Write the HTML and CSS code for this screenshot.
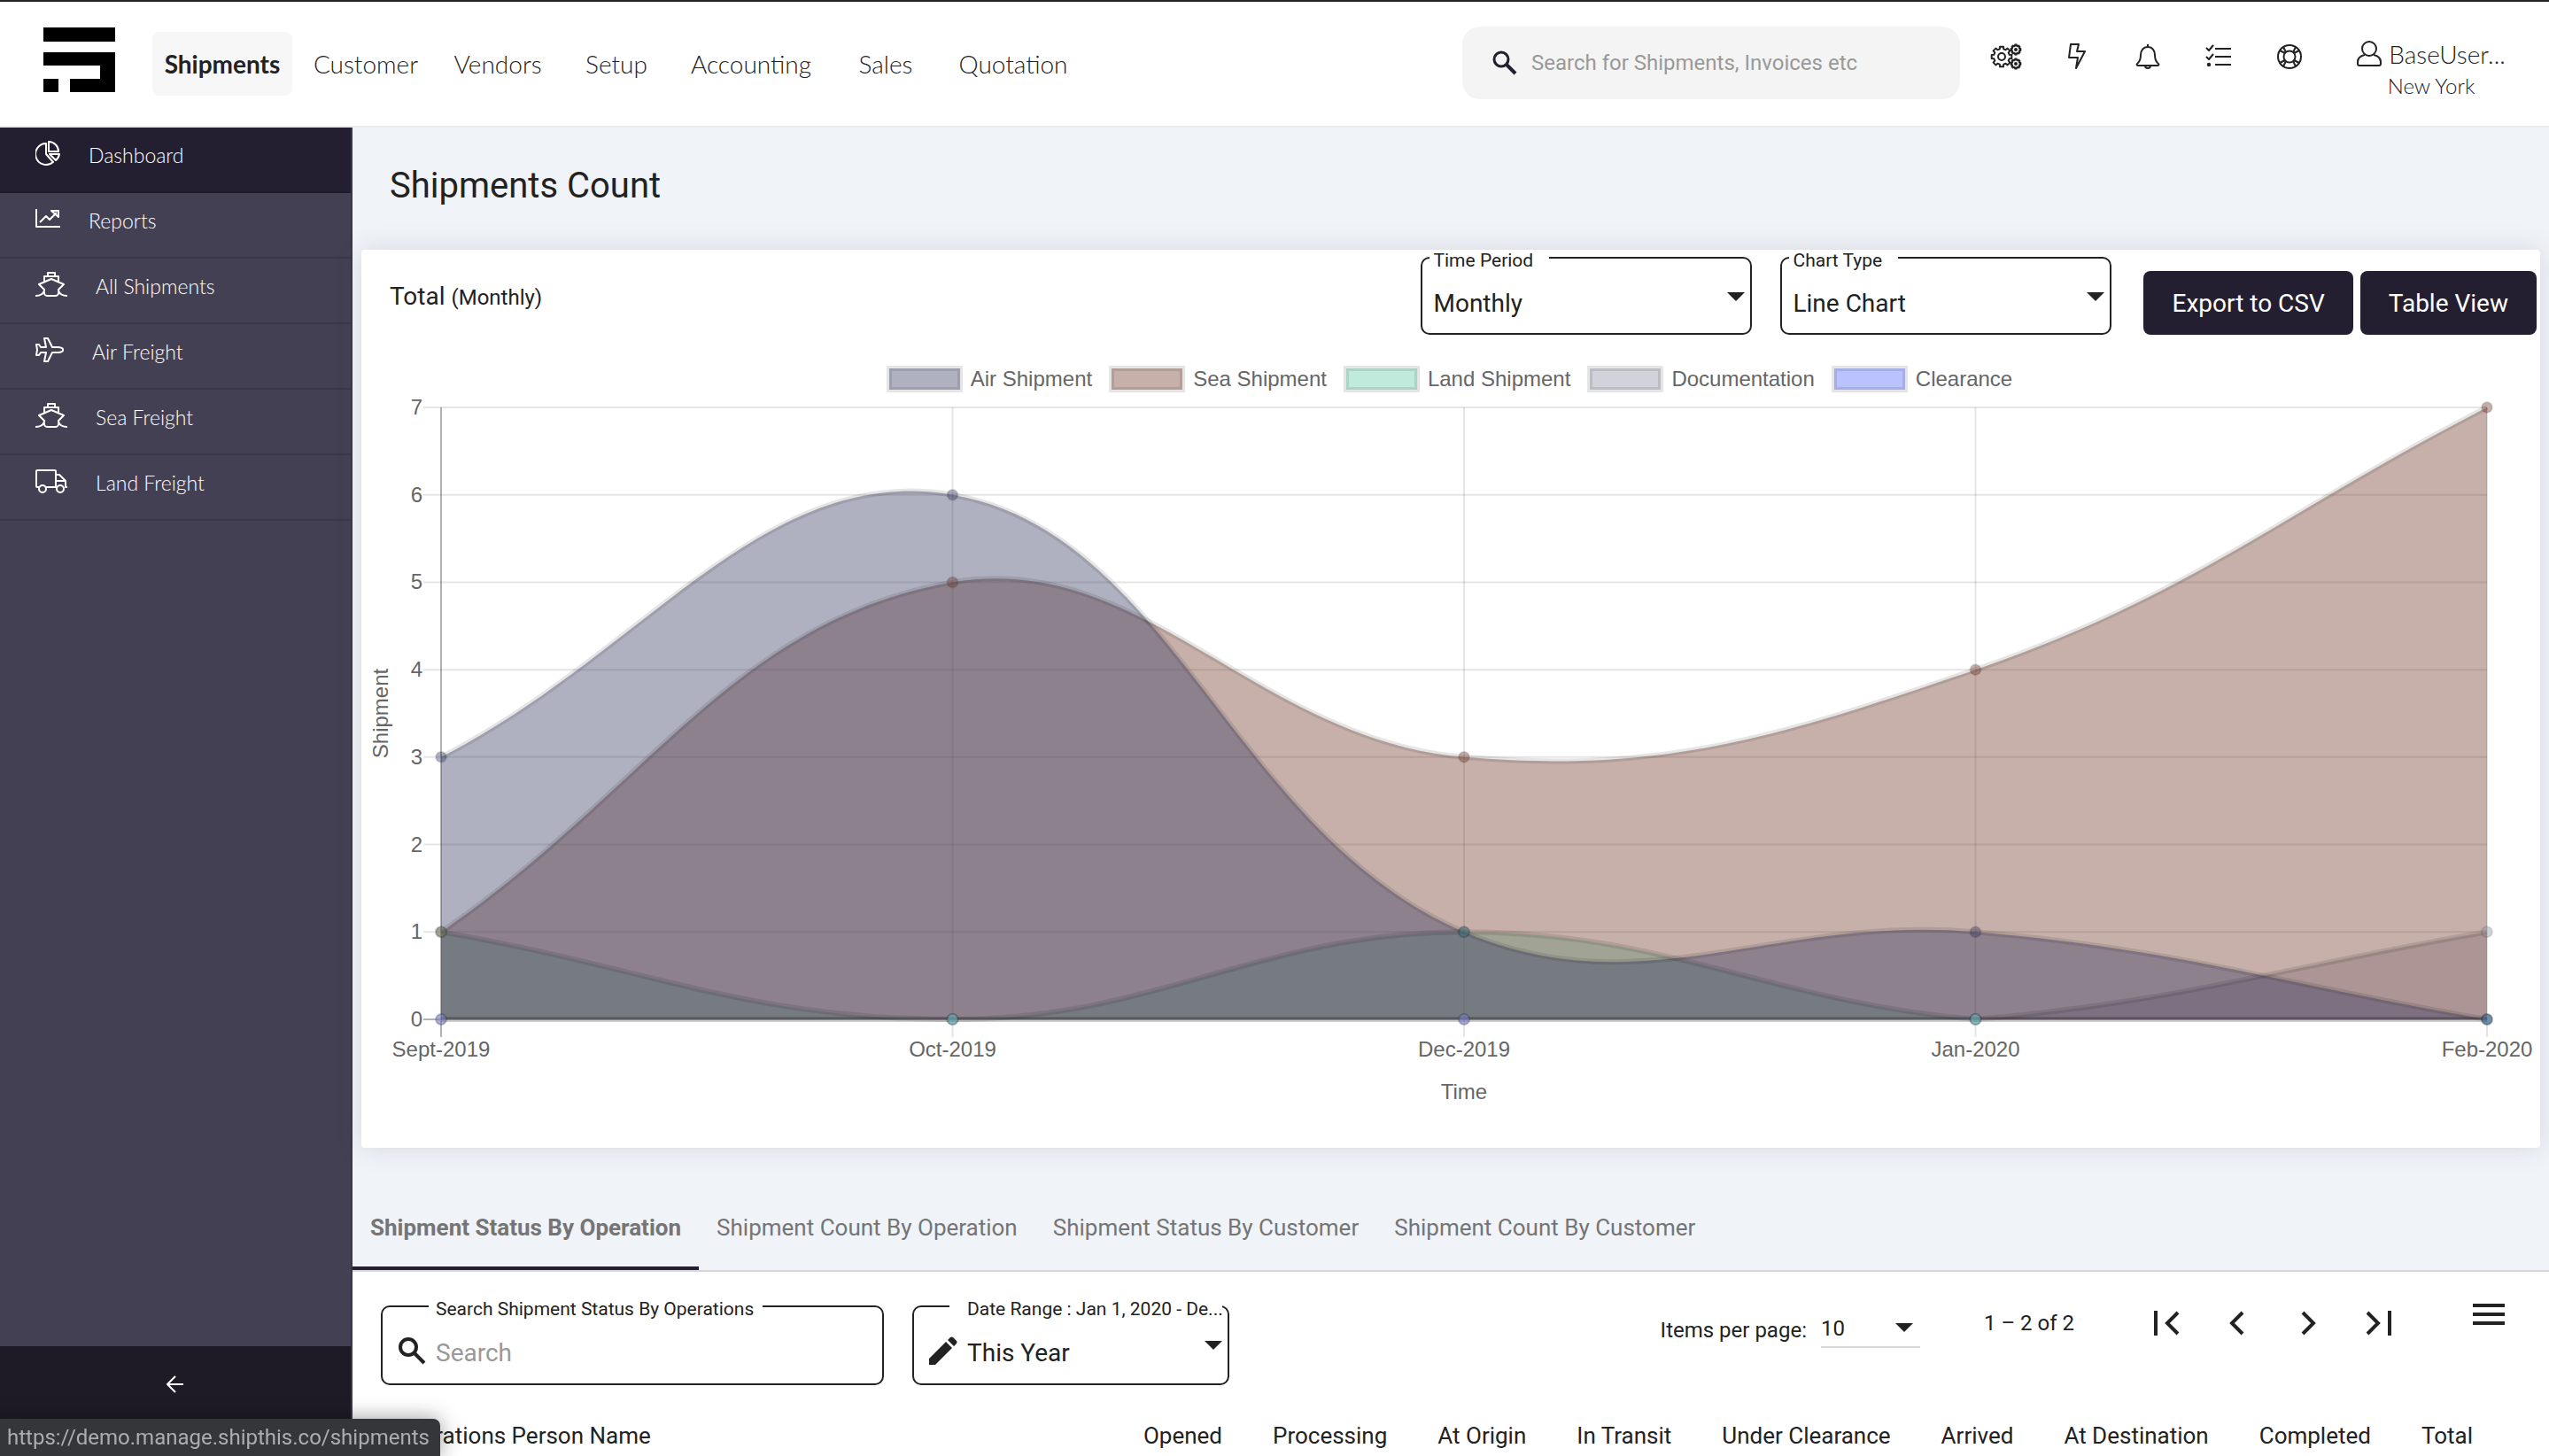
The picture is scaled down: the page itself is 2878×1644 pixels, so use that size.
FILE: index.html
```html
<!DOCTYPE html>
<html lang="en">
<head>
    <meta charset="UTF-8">
    <title>Shipments</title>
    <link rel="stylesheet" href="styles.css">
</head>
<body>

<header class="header">
    <a class="logo" href="#" aria-label="Home">
        <svg width="82" height="74" viewBox="0 0 82 74">
            <path d="M0 0h81v16H0zM0 28h81v45H30V58h34V43H0zM0 58h17v15H0z"/>
        </svg>
    </a>
    <nav class="menu">
        <a class="active" href="#">Shipments</a>
        <a href="#">Customer</a>
        <a href="#">Vendors</a>
        <a href="#">Setup</a>
        <a href="#">Accounting</a>
        <a href="#">Sales</a>
        <a href="#">Quotation</a>
    </nav>
    <label class="search">
        <svg width="28" height="28" viewBox="0 0 28 28">
            <circle cx="10" cy="10" r="8" fill="none" stroke="#241f30" stroke-width="3"/>
            <path d="M16 16l10 10" stroke="#241f30" stroke-width="4"/>
        </svg>
        <input type="text" placeholder="Search for Shipments, Invoices etc">
    </label>
    <div class="tools">
        <button aria-label="Settings">
            <svg class="icon" width="36" height="30" viewBox="0 0 36 30">
                <defs>
                    <path id="gear" d="M8.7-2.2L11.3-2V2L8.7 2.2 7.7 4.6 9.4 6.6 6.6 9.4 4.6 7.7 2.2 8.7 2 11.3H-2L-2.2 8.7-4.6 7.7-6.6 9.4-9.4 6.6-7.7 4.6-8.7 2.2-11.3 2V-2L-8.7-2.2-7.7-4.6-9.4-6.6-6.6-9.4-4.6-7.7-2.2-8.7-2-11.3H2L2.2-8.7 4.6-7.7 6.6-9.4 9.4-6.6 7.7-4.6z"/>
                </defs>
                <use href="#gear" transform="translate(13 15)"/>
                <circle cx="13" cy="15" r="4"/>
                <use href="#gear" transform="translate(29 7) scale(.48)" stroke-width="4"/>
                <circle cx="29" cy="7" r="1"/>
                <use href="#gear" transform="translate(29 23) scale(.48)" stroke-width="4"/>
                <circle cx="29" cy="23" r="1"/>
            </svg>
        </button>
        <button aria-label="Quick actions">
            <svg class="icon" width="22" height="30" viewBox="0 0 22 30">
                <path d="M4 1h9l-2 8h9L10 28l2-12H2z"/>
            </svg>
        </button>
        <button aria-label="Notifications">
            <svg class="icon" width="28" height="30" viewBox="0 0 28 30">
                <path d="M14 1v3M14 4c-5 0-8 4-8 9 0 7-2 8-4 10-1 1 0 2 1 2h22c1 0 2-1 1-2-2-2-4-3-4-10 0-5-3-9-8-9zM11 25c0 4 6 4 6 0"/>
            </svg>
        </button>
        <button aria-label="Tasks">
            <svg class="icon" width="30" height="30" viewBox="0 0 30 30">
                <path d="M1 5l3 3 5-6M1 15l3 3 5-6M11 6h18M11 15h18M11 24h18"/>
                <circle cx="4" cy="24" r="1.2"/>
            </svg>
        </button>
        <button aria-label="Help">
            <svg class="icon" width="30" height="30" viewBox="0 0 30 30">
                <circle cx="15" cy="15" r="13"/>
                <circle cx="15" cy="15" r="6.5"/>
                <path d="M4 8l6 3M8 4l3 6M22 4l-3 6M26 8l-6 3M4 22l6-3M8 26l3-6M22 26l-3-6M26 22l-6-3"/>
            </svg>
        </button>
    </div>
    <button class="user">
        <span class="user-name">
            <svg class="icon" width="28" height="30" viewBox="0 0 28 30">
                <circle cx="14" cy="9" r="8"/>
                <path d="M9 16c-5 1-8 4-8 8v2c0 1 1 2 2 2h22c1 0 2-1 2-2v-2c0-4-3-7-8-8"/>
            </svg>
            BaseUser...
        </span>
        <span class="user-city">New York</span>
    </button>
</header>

<div class="page">
    <aside class="sidebar">
        <nav>
            <a class="active" href="#">
                <svg class="icon" width="28" height="28" viewBox="0 0 28 28">
                    <path d="M12 3A12 12 0 1 0 20 24L12 15zM15 1v11h11A11 11 0 0 0 15 1zM16 15h11a11 11 0 0 1-4 7z"/>
                </svg>
                Dashboard
            </a>
            <a href="#">
                <svg class="icon" width="28" height="28" viewBox="0 0 28 28">
                    <path d="M1 3v20h27M5 18l7-7 4 4 8-8M18 5h8v7z"/>
                </svg>
                Reports
            </a>
            <a href="#">
                <svg class="icon" width="36" height="28" viewBox="0 0 36 28">
                    <path d="M10 11V5h16v6M14 5V1h8v4M18 8L4 14l6 6c-1 5 1 7 3 7h10c2 0 4-2 3-7l6-6zM0 27c6 0 9-2 10-6M36 27c-6 0-9-2-10-6"/>
                </svg>
                All Shipments
            </a>
            <a href="#">
                <svg class="icon" width="32" height="28" viewBox="0 0 32 28">
                    <path d="M19 11h7c7 1 7 5 0 6h-7l-5 10h-4l2-10H6l-2 3H1l1-6-1-6h3l2 3h6L10 1h4z"/>
                </svg>
                Air Freight
            </a>
            <a href="#">
                <svg class="icon" width="36" height="28" viewBox="0 0 36 28">
                    <path d="M10 11V5h16v6M14 5V1h8v4M18 8L4 14l6 6c-1 5 1 7 3 7h10c2 0 4-2 3-7l6-6zM0 27c6 0 9-2 10-6M36 27c-6 0-9-2-10-6"/>
                </svg>
                Sea Freight
            </a>
            <a href="#">
                <svg class="icon" width="36" height="28" viewBox="0 0 36 28">
                    <path d="M4 21H2c-1 0-1-1-1-1V3c0-1 1-1 1-1h20c1 0 1 1 1 1v18H12M23 7h4l7 7v7h2M34 14H23M23 21h1"/>
                    <circle cx="8" cy="23" r="4"/>
                    <circle cx="28" cy="23" r="4"/>
                </svg>
                Land Freight
            </a>
        </nav>
        <button class="collapse" aria-label="Collapse menu">
            <svg class="icon" width="20" height="20" viewBox="0 0 20 20">
                <path d="M19 10H2M10 1l-9 9 9 9"/>
            </svg>
        </button>
    </aside>

    <main class="main">
        <h1>Shipments Count</h1>

        <section class="card">
            <div class="card-head">
                <h2>Total <small>(Monthly)</small></h2>
                <div class="field">
                    <label for="period">Time Period</label>
                    <select id="period">
                        <option>Monthly</option>
                    </select>
                    <svg class="caret" width="20" height="10"><path d="M0 0h20L10 10z"/></svg>
                </div>
                <div class="field">
                    <label for="type">Chart Type</label>
                    <select id="type">
                        <option>Line Chart</option>
                    </select>
                    <svg class="caret" width="20" height="10"><path d="M0 0h20L10 10z"/></svg>
                </div>
                <div class="buttons">
                    <button>Export to CSV</button>
                    <button>Table View</button>
                </div>
            </div>
            <ul class="legend">
                <li><span class="swatch air"></span>Air Shipment</li>
                <li><span class="swatch sea"></span>Sea Shipment</li>
                <li><span class="swatch land"></span>Land Shipment</li>
                <li><span class="swatch docs"></span>Documentation</li>
                <li><span class="swatch clearance"></span>Clearance</li>
            </ul>
            <svg class="chart" id="chart"></svg>
        </section>

        <nav class="tabs">
            <a class="active" href="#">Shipment Status By Operation</a>
            <a href="#">Shipment Count By Operation</a>
            <a href="#">Shipment Status By Customer</a>
            <a href="#">Shipment Count By Customer</a>
        </nav>

        <section class="status">
            <div class="toolbar">
                <div class="field field-search">
                    <label for="search">Search Shipment Status By Operations</label>
                    <svg class="field-icon" width="32" height="32" viewBox="0 0 32 32">
                        <circle cx="12" cy="12" r="9" fill="none" stroke="#222" stroke-width="4"/>
                        <path d="M19 19l11 11" stroke="#222" stroke-width="4"/>
                    </svg>
                    <input id="search" type="text" placeholder="Search">
                </div>
                <div class="field field-date">
                    <label for="range">Date Range : Jan 1, 2020 - De...</label>
                    <svg class="field-icon" width="32" height="32" viewBox="0 0 32 32">
                        <path d="M0 32v-7L19 6l7 7L7 32zM21 4l3-3q2-1 3 0l4 4q1 1 0 3l-3 3z" fill="#222"/>
                    </svg>
                    <select id="range">
                        <option>This Year</option>
                    </select>
                    <svg class="caret" width="20" height="10"><path d="M0 0h20L10 10z"/></svg>
                </div>
                <div class="paginator">
                    <label for="size">Items per page:</label>
                    <div class="size">
                        <select id="size">
                            <option>10</option>
                        </select>
                        <svg class="caret" width="20" height="10"><path d="M0 0h20L10 10z"/></svg>
                    </div>
                    <span class="range">1 – 2 of 2</span>
                    <button aria-label="First page">
                        <svg width="32" height="28" viewBox="0 0 32 28"><path d="M4 0v28M29 2L17 14l12 12"/></svg>
                    </button>
                    <button aria-label="Previous page">
                        <svg width="32" height="28" viewBox="0 0 32 28"><path d="M22 2L10 14l12 12"/></svg>
                    </button>
                    <button aria-label="Next page">
                        <svg width="32" height="28" viewBox="0 0 32 28"><path d="M10 2l12 12-12 12"/></svg>
                    </button>
                    <button aria-label="Last page">
                        <svg width="32" height="28" viewBox="0 0 32 28"><path d="M28 0v28M3 2l12 12L3 26"/></svg>
                    </button>
                </div>
                <button class="columns" aria-label="Columns">
                    <svg width="36" height="24"><path d="M0 0h36v4H0zM0 10h36v4H0zM0 20h36v4H0z"/></svg>
                </button>
            </div>
            <table class="table">
                <thead>
                <tr>
                    <th>Operations Person Name</th>
                    <th>Opened</th>
                    <th>Processing</th>
                    <th>At Origin</th>
                    <th>In Transit</th>
                    <th>Under Clearance</th>
                    <th>Arrived</th>
                    <th>At Destination</th>
                    <th>Completed</th>
                    <th>Total</th>
                </tr>
                </thead>
            </table>
        </section>
    </main>
</div>

<div class="link-status">https://demo.manage.shipthis.co/shipments</div>

<script src="chart.js"></script>
</body>
</html>
```

FILE: styles.css
```css
* {
    box-sizing: border-box;
}

body {
    margin: 0;
    height: 100vh;
    display: flex;
    flex-direction: column;
    overflow: hidden;
    font-family: Roboto, sans-serif;
    font-size: 28px;
    color: #222;
    background: #f0f3f8;
}

a {
    color: inherit;
    text-decoration: none;
}

button,
input,
select {
    font: inherit;
    color: inherit;
    border: 0;
    padding: 0;
    background: none;
    outline: none;
}

button,
select {
    cursor: pointer;
}

select {
    appearance: none;
}

svg {
    display: block;
    flex: none;
}

.icon {
    fill: none;
    stroke: currentColor;
    stroke-width: 2;
    stroke-linejoin: round;
}

/* header */

.header {
    flex: none;
    display: flex;
    align-items: center;
    height: 144px;
    padding: 0 46px 0 49px;
    background: #fff;
    border-top: 2px solid #242224;
    border-bottom: 2px solid #ececec;
    font-family: Lato, sans-serif;
    font-weight: 300;
}

.logo {
    width: 123px;
    padding-bottom: 8px;
}

.menu {
    display: grid;
    grid-template-columns: 158px 166px 132px 136px 168px 136px 152px;
    line-height: 72px;
    text-align: center;
}

.menu .active {
    font-weight: bold;
    background: #f7f7f7;
    border-radius: 8px;
}

.search {
    display: flex;
    align-items: center;
    gap: 16px;
    width: 562px;
    height: 82px;
    margin: 0 0 2px auto;
    padding: 0 34px;
    border-radius: 20px;
    background: #f4f4f4;
    font-family: Roboto, sans-serif;
    font-size: 24px;
    font-weight: 400;
}

.search input {
    flex: 1;
    min-width: 0;
}

input::placeholder {
    color: #999;
    opacity: 1;
}

.tools {
    display: flex;
    margin-left: 12px;
    padding-bottom: 16px;
}

.tools button {
    display: flex;
    justify-content: center;
    width: 80px;
}

.user {
    display: flex;
    flex-direction: column;
    align-items: center;
    width: 174px;
    margin-left: 33px;
    padding-top: 14px;
    line-height: 36px;
    white-space: nowrap;
}

.user-name {
    display: flex;
    align-items: center;
    gap: 8px;
}

.user-city {
    font-size: 24px;
}

/* sidebar */

.page {
    flex: 1;
    display: flex;
    min-height: 0;
}

.sidebar {
    flex: none;
    display: flex;
    flex-direction: column;
    justify-content: space-between;
    width: 398px;
    border-right: 2px solid #3b3749;
    background: #444054;
    color: #fff;
    font-family: Lato, sans-serif;
    font-size: 23px;
    font-weight: 300;
}

.sidebar a {
    display: flex;
    align-items: center;
    gap: 32px;
    height: 74px;
    padding: 0 40px 10px;
    border-bottom: 2px solid #3b3749;
}

.sidebar a svg {
    margin-bottom: 4px;
}

.sidebar .active {
    background: #241f30;
    border-color: #1f1a2b;
}

.collapse {
    display: flex;
    justify-content: center;
    height: 124px;
    padding-top: 33px;
    background: #1f1b26;
}

/* chart card */

.main {
    flex: 1;
    min-width: 0;
}

h1 {
    margin: 0;
    padding: 42px 42px 48px;
    font-size: 40px;
    font-weight: 400;
    line-height: 48px;
}

.card {
    margin: 0 10px;
    padding-top: 8px;
    border-radius: 4px;
    background: #fff;
    box-shadow: 0 0 30px rgba(69, 65, 78, .15);
}

.card-head {
    display: flex;
    align-items: center;
    gap: 32px;
    padding: 0 4px 0 32px;
}

.card-head h2 {
    flex: 1;
    margin: 0;
    font-size: 28px;
    font-weight: 400;
}

.card-head small {
    font-size: 24px;
}

.field {
    position: relative;
    display: flex;
    align-items: center;
    width: 374px;
    height: 88px;
    padding: 16px 12px 0;
    border: 2px solid #222;
    border-radius: 10px;
}

.field label {
    position: absolute;
    top: -10px;
    left: 8px;
    padding: 0 18px 0 4px;
    background: #fff;
    font-size: 21px;
    line-height: 24px;
}

.field select,
.field input {
    flex: 1;
    min-width: 0;
}

.caret {
    position: absolute;
    right: 6px;
    top: 38px;
    fill: #222;
    pointer-events: none;
}

.buttons {
    display: flex;
    gap: 8px;
    align-self: flex-end;
    margin-left: 4px;
}

.buttons button {
    height: 72px;
    padding: 0 32px;
    border-radius: 8px;
    background: #241f30;
    color: #fff;
}

.legend {
    display: flex;
    justify-content: center;
    gap: 22px;
    margin: 38px 0 0;
    padding: 0;
    list-style: none;
    font: 24px/24px "Liberation Sans", sans-serif;
    color: #666;
}

.legend li {
    display: flex;
    gap: 12px;
}

.swatch {
    width: 80px;
    height: 24px;
    box-shadow: 0 0 0 3px rgba(0, 0, 0, .1), inset 0 0 0 3px rgba(0, 0, 0, .1);
}

.air {
    background: rgba(55, 60, 100, .4);
    fill: rgba(55, 60, 100, .4);
}

.sea {
    background: rgba(115, 58, 42, .4);
    fill: rgba(115, 58, 42, .4);
}

.land {
    background: rgba(97, 205, 167, .4);
    fill: rgba(97, 205, 167, .4);
}

.docs {
    background: rgba(142, 142, 162, .4);
    fill: rgba(142, 142, 162, .4);
}

.clearance {
    background: rgba(82, 102, 255, .4);
    fill: rgba(82, 102, 255, .4);
}

.chart {
    width: 100%;
    height: 856px;
    font: 24px "Liberation Sans", sans-serif;
}

.chart text {
    fill: #666;
}

.grid {
    stroke: rgba(0, 0, 0, .1);
    stroke-width: 2;
}

.axis {
    stroke: rgba(0, 0, 0, .3);
    stroke-width: 2;
}

.line {
    fill: none;
    stroke: rgba(0, 0, 0, .1);
    stroke-width: 6;
}

.point {
    stroke: rgba(0, 0, 0, .1);
    stroke-width: 2;
}

/* tabs and table */

.tabs {
    display: flex;
    padding-top: 46px;
    border-bottom: 2px solid #d6d7dd;
    font-size: 26px;
    line-height: 88px;
    color: #757575;
}

.tabs a {
    padding: 0 20px;
    border-bottom: 4px solid transparent;
}

.tabs .active {
    font-weight: bold;
    border-color: #241f30;
}

.status {
    padding-top: 38px;
    background: #fff;
}

.toolbar {
    display: flex;
    align-items: flex-start;
    padding: 0 50px 0 32px;
}

.toolbar .field {
    height: 90px;
    margin-right: 32px;
    padding-left: 17px;
}

.toolbar .field label {
    left: 52px;
    padding: 0 10px 0 8px;
}

.field-icon {
    margin: -4px 11px 0 0;
}

.toolbar .field-search {
    width: 568px;
}

.toolbar .field-date {
    width: 358px;
}

.toolbar .field-date label {
    left: 40px;
    right: 6px;
    padding: 0 0 0 20px;
    white-space: nowrap;
}

.paginator {
    display: flex;
    align-items: center;
    height: 40px;
    margin-left: auto;
    font-size: 24px;
}

.paginator > label {
    padding-top: 16px;
}

.size {
    position: relative;
    width: 112px;
    margin: 14px 72px 0 16px;
    border-bottom: 2px solid #d8d4d8;
}

.size select {
    width: 100%;
    height: 40px;
}

.size .caret {
    top: 14px;
    right: 8px;
}

.range {
    margin-right: 64px;
}

.paginator button {
    display: flex;
    justify-content: center;
    width: 80px;
}

.paginator button svg {
    fill: none;
    stroke: #222;
    stroke-width: 4;
}

.columns {
    margin: -2px 0 0 66px;
}

.columns svg {
    fill: #222;
}

.table {
    width: calc(100% - 76px);
    margin-left: 18px;
    border-spacing: 0;
    font-size: 26px;
    line-height: 32px;
}

.table th {
    padding: 41px 28px 41px 29px;
    font-weight: 400;
    text-align: left;
    white-space: nowrap;
}

.table th:first-child {
    width: 100%;
}

/* link preview in the window corner */

.link-status {
    position: fixed;
    left: 0;
    bottom: 0;
    height: 42px;
    padding: 0 12px 0 8px;
    border-radius: 0 8px 0 0;
    background: #35363a;
    color: #abadb0;
    box-shadow: 0 0 24px rgba(0, 0, 0, .4);
    font-size: 24px;
    line-height: 42px;
}
```

FILE: chart.js
```javascript
const svg = document.getElementById('chart');
const months = ['Sept-2019', 'Oct-2019', 'Dec-2019', 'Jan-2020', 'Feb-2020'];
const max = 7;

// first one ends up on top
const datasets = [
    {name: 'air', data: [3, 6, 1, 1, 0]},
    {name: 'sea', data: [1, 5, 3, 4, 7]},
    {name: 'land', data: [1, 0, 1, 0, 0]},
    {name: 'docs', data: [0, 0, 0, 0, 1]},
    {name: 'clearance', data: [0, 0, 0, 0, 0]}
];

function line(x1, y1, x2, y2, cls) {
    return `<line class="${cls}" x1="${x1}" y1="${y1}" x2="${x2}" y2="${y2}"/>`;
}

function controls(prev, cur, next, tension) {
    const d1 = Math.hypot(cur.x - prev.x, cur.y - prev.y);
    const d2 = Math.hypot(next.x - cur.x, next.y - cur.y);
    const a = tension * (d1 / (d1 + d2) || 0);
    const b = tension * (d2 / (d1 + d2) || 0);
    return {
        inX: cur.x - a * (next.x - prev.x),
        inY: cur.y - a * (next.y - prev.y),
        outX: cur.x + b * (next.x - prev.x),
        outY: cur.y + b * (next.y - prev.y)
    };
}

function draw() {
    const left = 90;
    const right = svg.clientWidth - 60;
    const top = 20;
    const bottom = 711;
    const step = (right - left) / (months.length - 1);
    const px = i => left + i * step;
    const py = v => bottom - v * (bottom - top) / max;
    const clamp = y => Math.min(bottom, Math.max(top, y));
    let out = '';

    for (let v = 0; v <= max; v++) {
        out += line(left - 20, py(v), right, py(v), v ? 'grid' : 'axis');
        out += `<text x="${left - 21}" y="${py(v) + 8}" text-anchor="end">${v}</text>`;
    }
    months.forEach((m, i) => {
        out += line(px(i), top, px(i), bottom + 20, i ? 'grid' : 'axis');
        out += `<text x="${px(i)}" y="753" text-anchor="middle">${m}</text>`;
    });

    // all the areas go below all the lines and points
    let areas = '';
    let lines = '';
    [...datasets].reverse().forEach(set => {
        const pts = set.data.map((v, i) => ({x: px(i), y: py(v)}));
        const cps = pts.map((p, i) => controls(pts[i - 1] || p, p, pts[i + 1] || p, 0.4));
        let d = `M${pts[0].x} ${pts[0].y}`;
        for (let i = 1; i < pts.length; i++) {
            const a = cps[i - 1];
            const b = cps[i];
            d += `C${a.outX} ${clamp(a.outY)} ${b.inX} ${clamp(b.inY)} ${pts[i].x} ${pts[i].y}`;
        }
        areas += `<path class="${set.name}" d="${d}V${bottom}H${left}z"/>`;
        lines += `<path class="line" d="${d}"/>`;
        pts.forEach(p => {
            lines += `<circle class="point ${set.name}" cx="${p.x}" cy="${p.y}" r="6"/>`;
        });
    });
    out += areas + lines;

    const midY = (top + bottom) / 2;
    out += `<text x="${(left + right) / 2}" y="801" text-anchor="middle">Time</text>`;
    out += `<text transform="translate(30 ${midY}) rotate(-90)" text-anchor="middle">Shipment</text>`;
    svg.innerHTML = out;
}

draw();
window.addEventListener('resize', draw);
```
